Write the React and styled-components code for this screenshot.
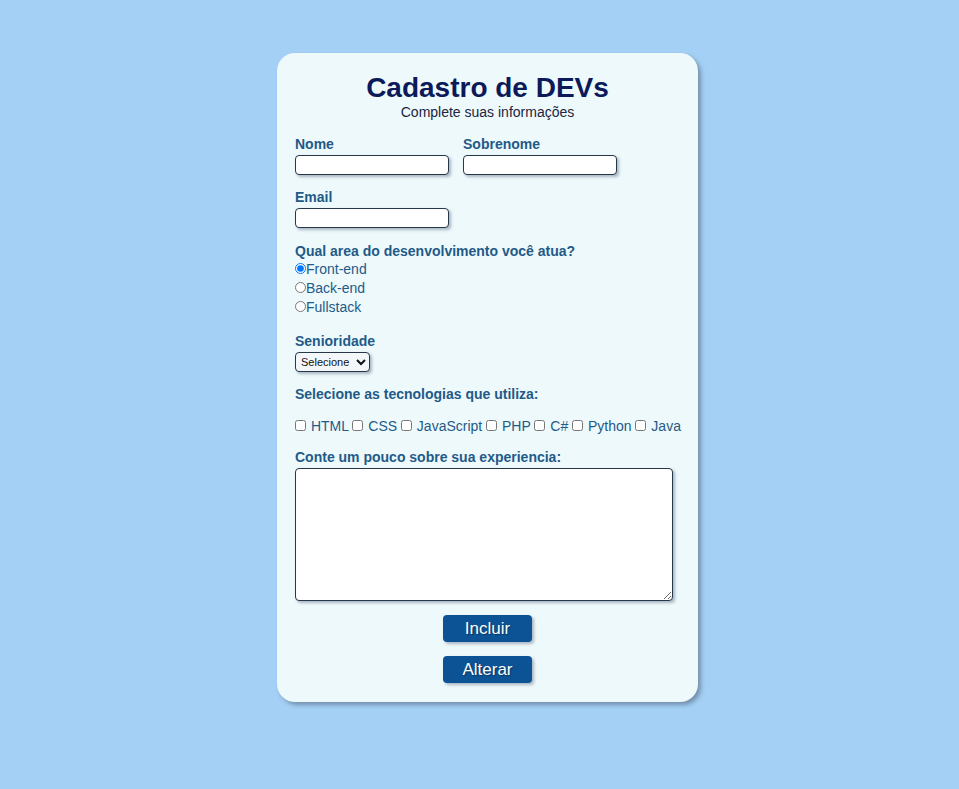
import React from 'react';
import styled, { createGlobalStyle } from 'styled-components';

// Page-wide reset and background
const GlobalStyle = createGlobalStyle`
  html, body {
    margin: 0;
    padding: 0;
    background-color: #a4d0f5;
    font-family: "Liberation Sans", Arial, sans-serif;
  }
`;

const Page = styled.main`
  min-height: 789px;
  display: flex;
  justify-content: center;
  align-items: flex-start;
  padding: 53px 0 0 16px;
  box-sizing: border-box;
`;

const Card = styled.section`
  width: 421px;
  box-sizing: border-box;
  padding: 19px 18px 19px;
  background-color: #eef9fb;
  border-radius: 18px;
  box-shadow: 3px 3px 4px rgba(60, 70, 90, 0.45);
`;

const Title = styled.h1`
  margin: 0;
  font-size: 28px;
  line-height: 32px;
  font-weight: 700;
  text-align: center;
  color: #0c1a5a;
`;

const Subtitle = styled.p`
  margin: 0;
  font-size: 14px;
  line-height: 16px;
  text-align: center;
  color: #1b2540;
`;

const Form = styled.form`
  display: flex;
  flex-direction: column;
`;

const Row = styled.div`
  display: flex;
  gap: 14px;
  margin-top: ${(p) => p.$top || 0}px;
`;

const Field = styled.div`
  display: flex;
  flex-direction: column;
  align-items: flex-start;
  margin-top: ${(p) => p.$top || 0}px;
`;

const Label = styled.label`
  font-size: 14px;
  line-height: 16px;
  font-weight: 700;
  color: #1f5a88;
`;

const TextInput = styled.input`
  box-sizing: border-box;
  width: 154px;
  height: 20px;
  margin-top: 3px;
  padding: 1px 4px;
  border: 1px solid #26384a;
  border-radius: 4px;
  background: #fff;
  box-shadow: 2px 2px 3px rgba(40, 60, 90, 0.35);
  font-family: inherit;
  font-size: 13px;
`;

const RadioList = styled.div`
  display: flex;
  flex-direction: column;
`;

const Option = styled.label`
  display: flex;
  align-items: center;
  height: 19px;
  font-size: 14px;
  color: #1f5a88;
`;

const Radio = styled.input.attrs({ type: 'radio' })`
  width: 11px;
  height: 11px;
  margin: 0;
`;

const Select = styled.select`
  box-sizing: border-box;
  width: 75px;
  height: 20px;
  margin-top: 3px;
  padding: 0 1px;
  border: 1px solid #26384a;
  border-radius: 4px;
  background: #f4f7f9;
  box-shadow: 2px 2px 3px rgba(40, 60, 90, 0.35);
  font-family: inherit;
  font-size: 11px;
  color: #111;
`;

const CheckRow = styled.div`
  display: flex;
  align-items: center;
  height: 19px;
  margin-top: 14px;
  font-size: 14px;
  color: #1f5a88;
  white-space: pre;
`;

const Check = styled.input.attrs({ type: 'checkbox' })`
  width: 11px;
  height: 11px;
  margin: 0 1px 0 0;
`;

const TextArea = styled.textarea`
  box-sizing: border-box;
  width: 378px;
  height: 133px;
  margin-top: 3px;
  border: 1px solid #26384a;
  border-radius: 4px;
  background: #fff;
  box-shadow: 2px 2px 3px rgba(40, 60, 90, 0.35);
  font-family: inherit;
`;

const Actions = styled.div`
  display: flex;
  flex-direction: column;
  align-items: center;
  gap: 14px;
  margin-top: 14px;
`;

const Button = styled.button`
  width: 89px;
  height: 27px;
  border: none;
  border-radius: 4px;
  background-color: #0b5394;
  color: #fff;
  font-family: inherit;
  font-size: 17px;
  text-shadow: 1px 1px 1px rgba(0, 0, 0, 0.35);
  box-shadow: 2px 2px 3px rgba(40, 60, 90, 0.35);
  cursor: pointer;

  &:hover {
    background-color: #0a4a85;
  }
`;

const techs = ['HTML', 'CSS', 'JavaScript', 'PHP', 'C#', 'Python', 'Java'];

const App = () => {
  return (
    <>
      <GlobalStyle />
      <Page>
        <Card>
          <Title>Cadastro de DEVs</Title>
          <Subtitle>Complete suas informações</Subtitle>
          <Form onSubmit={(e) => e.preventDefault()}>
            <Row $top={16}>
              <Field>
                <Label htmlFor="nome">Nome</Label>
                <TextInput id="nome" type="text" />
              </Field>
              <Field>
                <Label htmlFor="sobrenome">Sobrenome</Label>
                <TextInput id="sobrenome" type="text" />
              </Field>
            </Row>

            <Field $top={14}>
              <Label htmlFor="email">Email</Label>
              <TextInput id="email" type="email" />
            </Field>

            <Field $top={15}>
              <Label>Qual area do desenvolvimento você atua?</Label>
              <RadioList>
                <Option><Radio name="area" defaultChecked />Front-end</Option>
                <Option><Radio name="area" />Back-end</Option>
                <Option><Radio name="area" />Fullstack</Option>
              </RadioList>
            </Field>

            <Field $top={17}>
              <Label htmlFor="senioridade">Senioridade</Label>
              <Select id="senioridade" defaultValue="">
                <option value="">Selecione</option>
                <option value="junior">Júnior</option>
                <option value="pleno">Pleno</option>
                <option value="senior">Sênior</option>
              </Select>
            </Field>

            <Field $top={14}>
              <Label>Selecione as tecnologias que utiliza:</Label>
            </Field>
            <CheckRow>
              {techs.map((t, i) => (
                <React.Fragment key={t}>
                  <Check id={`tech-${i}`} />
                  <label htmlFor={`tech-${i}`}>{` ${t}${i < techs.length - 1 ? ' ' : ''}`}</label>
                </React.Fragment>
              ))}
            </CheckRow>

            <Field $top={14}>
              <Label htmlFor="experiencia">Conte um pouco sobre sua experiencia:</Label>
              <TextArea id="experiencia" />
            </Field>

            <Actions>
              <Button type="submit">Incluir</Button>
              <Button type="button">Alterar</Button>
            </Actions>
          </Form>
        </Card>
      </Page>
    </>
  );
};

export default App;
